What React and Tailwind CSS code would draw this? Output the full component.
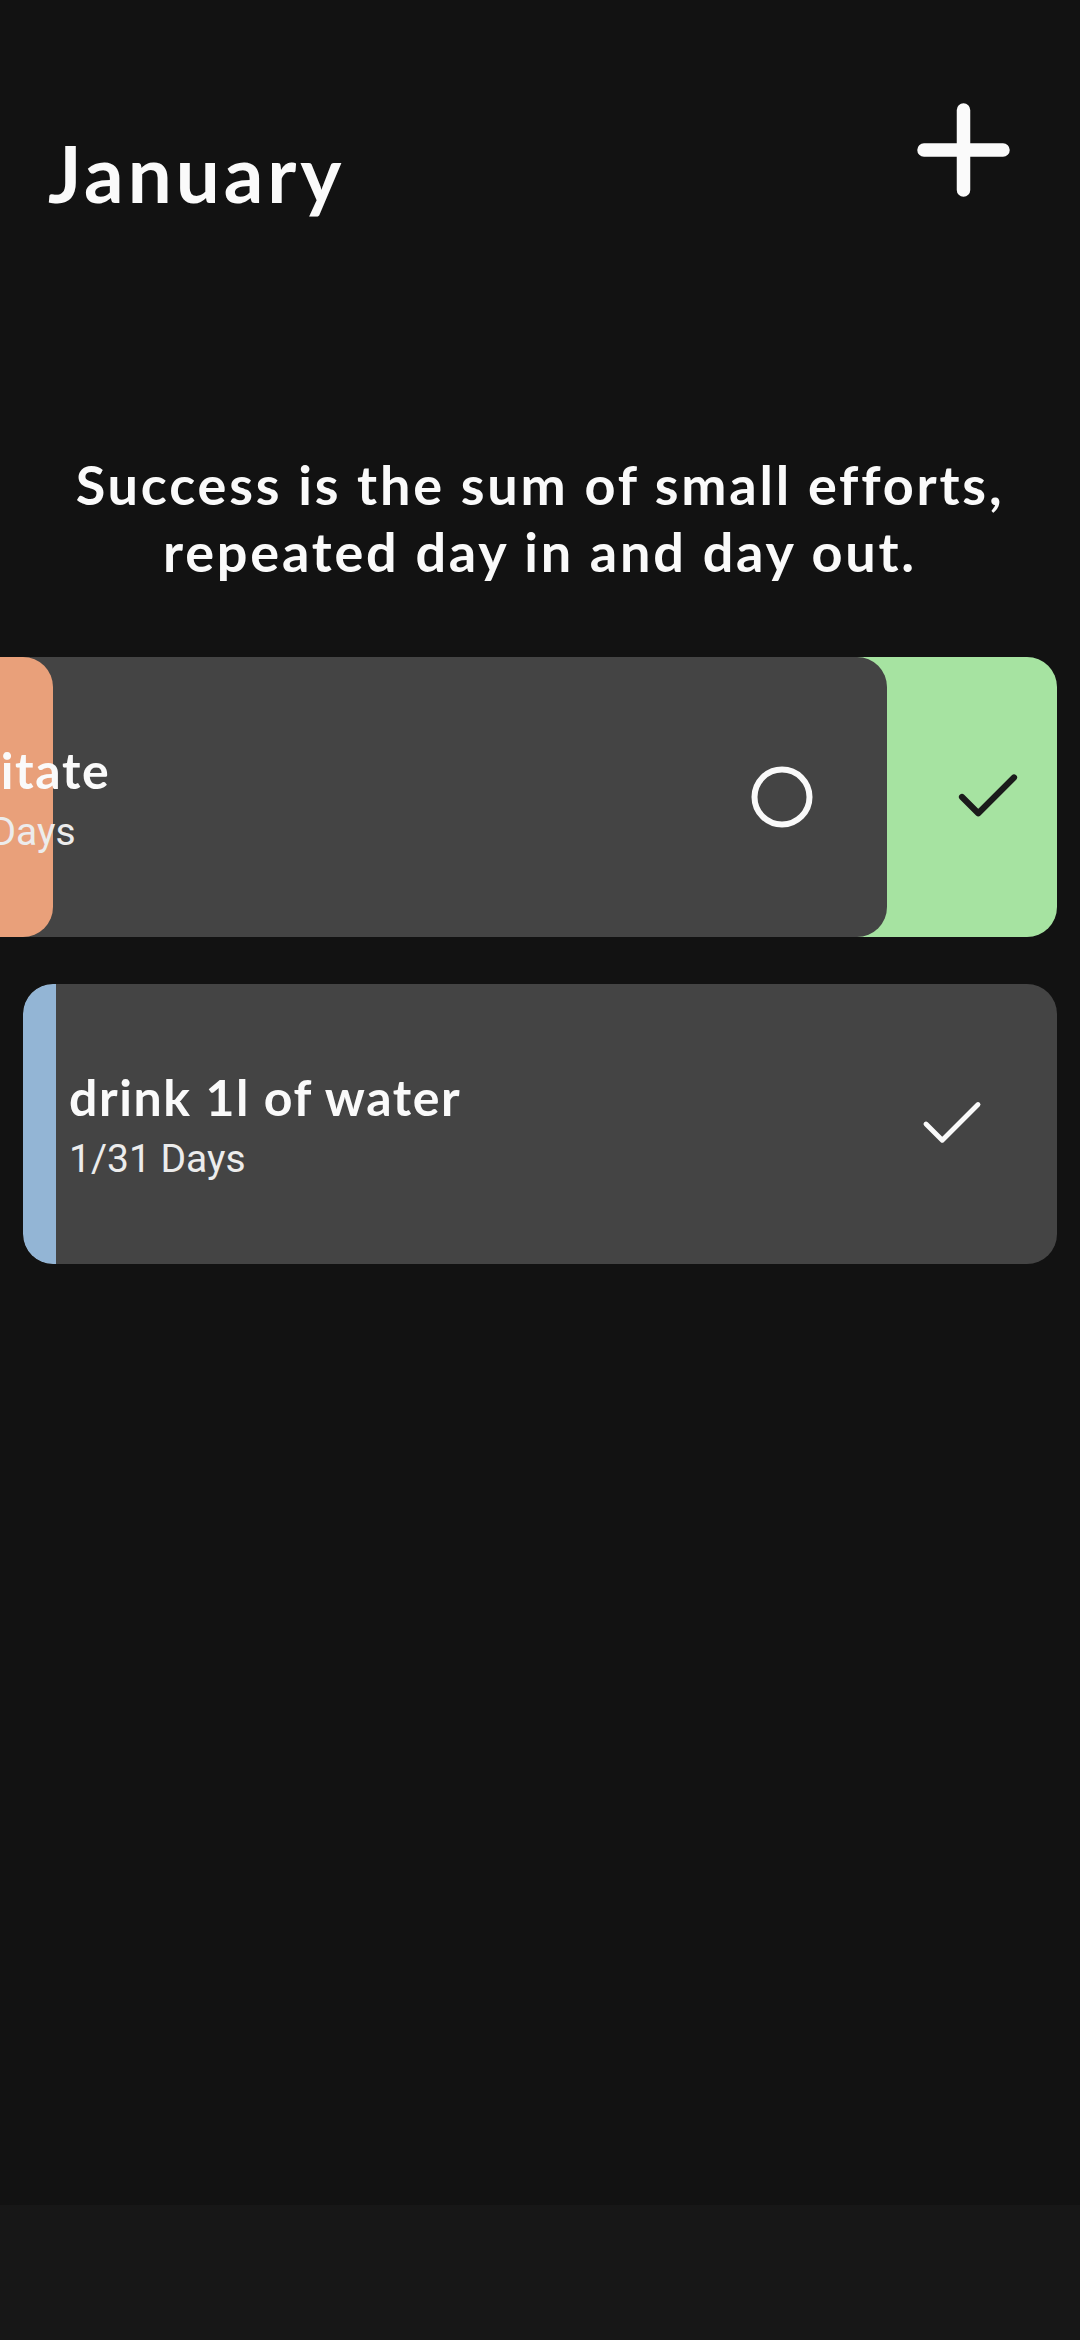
import React from "react";

const head = { fontFamily: "Lato, 'Noto Sans', sans-serif" };
const body = { fontFamily: "Roboto, 'Noto Sans', sans-serif" };

function Check({ color, sw }) {
  return (
    <svg width="78" height="78" viewBox="0 0 24 24" fill="none" stroke={color} strokeWidth={sw} strokeLinecap="round" strokeLinejoin="round">
      <path d="M20 6 9 17l-5-5" />
    </svg>
  );
}

function Ring() {
  return (
    <svg width="78" height="78" viewBox="0 0 78 78" fill="none">
      <circle cx="39" cy="39" r="27.5" stroke="#fafafa" strokeWidth="6" />
    </svg>
  );
}

function CardText({ title, sub }) {
  return (
    <div className="flex flex-col gap-[10px] relative z-10 min-w-0">
      <div className="text-[50px] leading-[60px] font-bold tracking-[1.6px] text-[#fafafa] whitespace-nowrap" style={head}>{title}</div>
      <div className="text-[39px] leading-[45px] text-[#ececec] whitespace-nowrap" style={body}>{sub}</div>
    </div>
  );
}

export default function App() {
  return (
    <div className="w-[1080px] h-[2340px] bg-[#121212] flex flex-col overflow-hidden">
      <div className="flex justify-between items-start pl-[48px] pr-[70px] pt-[103px]">
        <h1 className="mt-[31px] text-[78px] leading-[78px] font-bold tracking-[4px] text-[#fafafa]" style={head}>January</h1>
        <svg width="93" height="94" viewBox="0 0 93 94" fill="none" stroke="#fafafa" strokeWidth="13.5" strokeLinecap="round">
          <path d="M46.5 7v80M7 47h79" />
        </svg>
      </div>

      <p className="mt-[239px] text-center text-[54px] leading-[67px] font-bold tracking-[2.8px] text-[#fafafa] px-[20px]" style={head}>
        Success is the sum of small efforts,<br />repeated day in and day out.
      </p>

      {/* swiped card */}
      <div className="relative h-[280px] mt-[72px]">
        <div className="absolute inset-y-0 left-[23px] right-[23px] rounded-[30px] bg-[#a6e3a1] flex items-center justify-end pr-[30px]">
          <Check color="#1b1b1b" sw={1.9} />
        </div>
        <div className="absolute inset-y-0 left-[-147px] w-[1034px] rounded-[30px] bg-[#444444] overflow-hidden flex items-center">
          <div className="absolute inset-y-0 left-[147px] w-[53px] rounded-r-[30px] bg-[#e9a07a]" />
          <div className="self-stretch w-[33px] bg-[#e9a07a]" />
          <div className="flex-1 pl-[13px]">
            <CardText title="meditate" sub="0/31 Days" />
          </div>
          <div className="pr-[66px] flex items-center">
            <Ring />
          </div>
        </div>
      </div>

      {/* normal card */}
      <div className="mt-[47px] mx-[23px] h-[280px] rounded-[30px] bg-[#444444] overflow-hidden flex items-center">
        <div className="self-stretch w-[33px] bg-[#93b5d5] rounded-l-[30px]" />
        <div className="flex-1 pl-[13px]">
          <CardText title="drink 1l of water" sub="1/31 Days" />
        </div>
        <div className="pr-[66px] flex items-center">
          <Check color="#fafafa" sw={1.5} />
        </div>
      </div>

      <div className="flex-1" />
      <div className="h-[135px] bg-[#171717]" />
    </div>
  );
}
